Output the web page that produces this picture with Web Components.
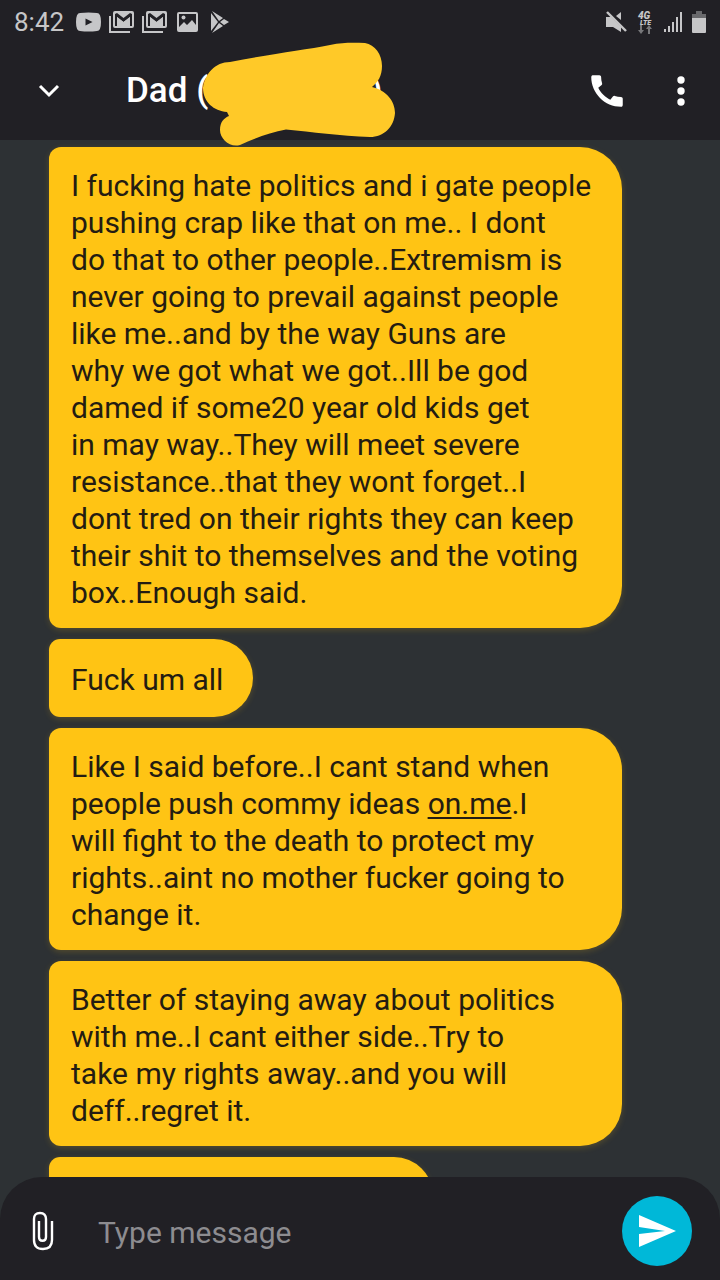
<!DOCTYPE html>
<html lang="en">
<head>
<meta charset="utf-8">
<meta name="viewport" content="width=device-width, initial-scale=1">
<title>Messages</title>
<style>
  html, body { margin: 0; height: 100%; background: #2d3134; }
  body { font-family: Roboto, "Liberation Sans", sans-serif; }
</style>
</head>
<body>
<chat-app></chat-app>
<script>
const define = (name, markup, setup) => {
  const template = document.createElement("template");
  template.innerHTML = markup;
  customElements.define(name, class extends HTMLElement {
    constructor() {
      super();
      this.attachShadow({ mode: "open" }).append(template.content.cloneNode(true));
      if (setup) setup(this);
    }
  });
};

define("status-bar", `
<style>
  :host { display: flex; align-items: center; justify-content: space-between; height: 44px; padding: 0 13px 0 14px; background: #212025; color: #c6c6c8; }
  .group { display: flex; align-items: center; }
  time { font-size: 26px; line-height: 32px; margin-right: 12px; }
  svg { display: block; fill: currentColor; }
  .left { gap: 8px; }
  .left time { margin-right: 4px; }
  .right { gap: 9px; }
</style>
<div class="group left">
  <time>8:42</time>
  <svg width="25" height="20" viewBox="0 0 25 20"><path fill-rule="evenodd" d="M4 1Q12.500 0 21 1Q25 1 25 10T21 19Q12.500 20 4 19Q0 19 0 10T4 1ZM9.500 6.500V13.500L16.500 10Z"/></svg>
  <svg width="25" height="22" viewBox="0 0 25 22"><path d="M0 5H2V20H21V22H0Z"/><path fill-rule="evenodd" d="M6 0H23Q25 0 25 2V15Q25 17 23 17H6Q4 17 4 15V2Q4 0 6 0ZM6 3V15H8V6L14.500 11L21 6V15H23V3L21 2L14.500 7L8 2Z"/><path d="M8 6L14.500 11L21 6V16H8Z"/></svg>
  <svg width="25" height="22" viewBox="0 0 25 22"><path d="M0 5H2V20H21V22H0Z"/><path fill-rule="evenodd" d="M6 0H23Q25 0 25 2V15Q25 17 23 17H6Q4 17 4 15V2Q4 0 6 0ZM6 3V15H8V6L14.500 11L21 6V15H23V3L21 2L14.500 7L8 2Z"/><path d="M8 6L14.500 11L21 6V16H8Z"/></svg>
  <svg width="25" height="22" viewBox="0 0 25 22"><path fill-rule="evenodd" d="M4 1H21Q23 1 23 3V19Q23 21 21 21H4Q2 21 2 19V3Q2 1 4 1ZM4 3V16L9 11L12 14L17 9L21 14V3Z"/><circle cx="8.500" cy="6.500" r="2"/></svg>
  <svg width="25" height="22" viewBox="0 0 25 22"><path d="M4 0L15 7L11 10ZM3 2L10 11L3 20ZM4 22L11 12L15 15ZM16 8L21 11L16 14L12 11Z"/></svg>
</div>
<div class="group right">
  <svg width="22" height="22" viewBox="0 0 22 22"><path d="M1 6H6L16 16V21L8 16H1ZM16 1V9L11 5Z"/><path d="M2 1L21 20" stroke="currentColor" stroke-width="2.400"/></svg>
  <svg width="18" height="24" viewBox="0 0 18 24" font-family="Roboto, sans-serif" font-weight="900" font-style="italic"><text x="2" y="9" font-size="10">4G</text><text x="4" y="15" font-size="7">LTE</text><path fill="#77777a" d="M4 15H6V20H8L5 24L2 20H4ZM12 24H14V19H16L13 15L10 19H12Z"/></svg>
  <svg width="19" height="22" viewBox="0 0 19 22"><path d="M1 18H3V21H1ZM5 15H7V21H5ZM9 11H11V21H9ZM13 6H15V21H13ZM17 1H19V21H17Z"/></svg>
  <svg width="16" height="22" viewBox="0 0 16 22"><path fill="#69696c" d="M5 0H11V3H15V8H1V3H5Z"/><path d="M1 7H15V21Q15 22 14 22H2Q1 22 1 21Z"/></svg>
</div>`);

define("icon-button", `
<style>
  :host { display: block; }
  button { display: flex; align-items: center; justify-content: center; width: 70px; height: 70px; padding: 0; border: 0; border-radius: 50%; background: var(--button-bg, transparent); color: #fff; cursor: pointer; }
  :host([narrow]) button { width: 40px; }
</style>
<button type="button"><slot></slot></button>`, host => {
  host.shadowRoot.querySelector("button").setAttribute("aria-label", host.getAttribute("label") || "");
});

define("chat-header", `
<style>
  :host { display: flex; align-items: center; height: 96px; box-sizing: border-box; padding: 0 19px 2px 14px; background: #212025; color: #fff; position: relative; z-index: 1; }
  h1 { flex: 1; position: relative; margin: 0 0 0 42px; font-size: 35px; line-height: 40px; font-weight: 500; white-space: pre; }
  h1 i { display: inline-block; width: 162px; }
  h1 svg { position: absolute; left: 76px; top: -29px; }
  .actions { display: flex; align-items: center; gap: 19px; }
  svg { display: block; }
</style>
<icon-button label="Back"><svg width="24" height="16" viewBox="0 0 24 16"><path d="M3 3L12 12L21 3" fill="none" stroke="#fff" stroke-width="3"/></svg></icon-button>
<h1>Dad (<i></i>)<svg width="196" height="106" viewBox="202 42 196 106" aria-hidden="true"><path fill="#ffc928" d="M230 62C270 54 305 50 330 45C345 42 355 43 365 43C375 45 382 54 382 66C382 76 378 82 372 87C386 90 395 101 395 113C394 127 384 137 370 137C340 136 312 132 286 129.500C270 132 254 139 240 145C230 148 220 139 220 130C220 122 224 118 229 116L227 112C214 111 203 102 203 88C205 74 215 62 230 62Z"/></svg></h1>
<div class="actions">
  <icon-button label="Call"><svg width="42" height="42" viewBox="0 0 24 24" fill="#fff"><path d="M20.010 15.380c-1.230 0-2.420-.2-3.530-.56-.35-.12-.74-.03-1.010.24l-1.570 1.970c-2.830-1.350-5.480-3.900-6.890-6.830l1.950-1.660c.27-.28.35-.67.24-1.020-.37-1.110-.56-2.300-.56-3.530 0-.54-.45-.99-.99-.99H4.190C3.650 3 3 3.240 3 3.990 3 13.280 10.730 21 20.010 21c.71 0 .99-.63.99-1.180v-3.450c0-.54-.45-.99-.99-.99z"/></svg></icon-button>
  <icon-button narrow label="More options"><svg width="10" height="30" viewBox="0 0 10 30" fill="#fff"><circle cx="5" cy="4" r="3.700"/><circle cx="5" cy="15" r="3.700"/><circle cx="5" cy="26" r="3.700"/></svg></icon-button>
</div>`);

define("message-bubble", `
<style>
  :host { display: flex; align-items: center; box-sizing: border-box; width: fit-content; min-height: 78px; padding: 20px 30px 17px 22px; border-radius: 12px 42px 42px 12px; background: #ffc414; color: #241c12; font-size: 30px; line-height: 37px; box-shadow: 0 2px 6px #ffc41430; white-space: nowrap; flex: none; }
  :host([size="full"]) { width: 100%; }
  :host([size="medium"]) { width: 67%; }
</style>
<div><slot></slot></div>`);

define("message-composer", `
<style>
  :host { display: flex; align-items: center; flex: none; height: 103px; box-sizing: border-box; padding: 4px 28px 0 8px; border-radius: 42px 42px 0 0; background: #212025; }
  input { flex: 1; min-width: 0; margin: 0 20px; padding: 4px 0 0; border: 0; outline: 0; background: transparent; color: #fff; font: 30px/40px Roboto, "Liberation Sans", sans-serif; }
  input::placeholder { color: #8d8c90; opacity: 1; }
  .send { --button-bg: #00b8d8; }
  svg { display: block; }
</style>
<icon-button label="Attach"><svg width="22" height="40" viewBox="0 0 22 40" fill="none" stroke="#fff" stroke-width="2.400"><path d="M20 10V29C20 35 17 38 11 38S2 35 2 29V8C2 4 4 2 8 2S14 4 14 8V26C14 31 7 31 7 26V10"/></svg></icon-button>
<input type="text" placeholder="Type message" aria-label="Type message">
<icon-button class="send" label="Send"><svg width="38" height="34" viewBox="0 0 38 34" fill="#fff"><path d="M1 1L38 17L1 33V20L27 17L1 13Z"/></svg></icon-button>`);

define("chat-app", `
<style>
  :host { display: flex; flex-direction: column; height: 100vh; overflow: hidden; background: #2d3134; }
  status-bar, chat-header { flex: none; }
  main { flex: 1; min-height: 0; overflow: hidden; display: flex; flex-direction: column; gap: 11px; padding: 7px 98px 0 49px; }
  a { color: inherit; text-decoration-thickness: 2px; text-underline-offset: 3px; text-decoration-skip-ink: none; }
</style>
<status-bar></status-bar>
<chat-header></chat-header>
<main>
  <message-bubble size="full">I fucking hate politics and i gate people<br>pushing crap like that on me.. I dont<br>do that to other people..Extremism is<br>never going to prevail against people<br>like me..and by the way Guns are<br>why we got what we got..Ill be god<br>damed if some20 year old kids get<br>in may way..They will meet severe<br>resistance..that they wont forget..I<br>dont tred on their rights they can keep<br>their shit to themselves and the voting<br>box..Enough said.</message-bubble>
  <message-bubble>Fuck um all</message-bubble>
  <message-bubble size="full">Like I said before..I cant stand when<br>people push commy ideas <a href="#on.me">on.me</a>.I<br>will fight to the death to protect my<br>rights..aint no mother fucker going to<br>change it.</message-bubble>
  <message-bubble size="full">Better of staying away about politics<br>with me..I cant either side..Try to<br>take my rights away..and you will<br>deff..regret it.</message-bubble>
  <message-bubble size="medium"></message-bubble>
</main>
<message-composer></message-composer>`);
</script>
</body>
</html>
